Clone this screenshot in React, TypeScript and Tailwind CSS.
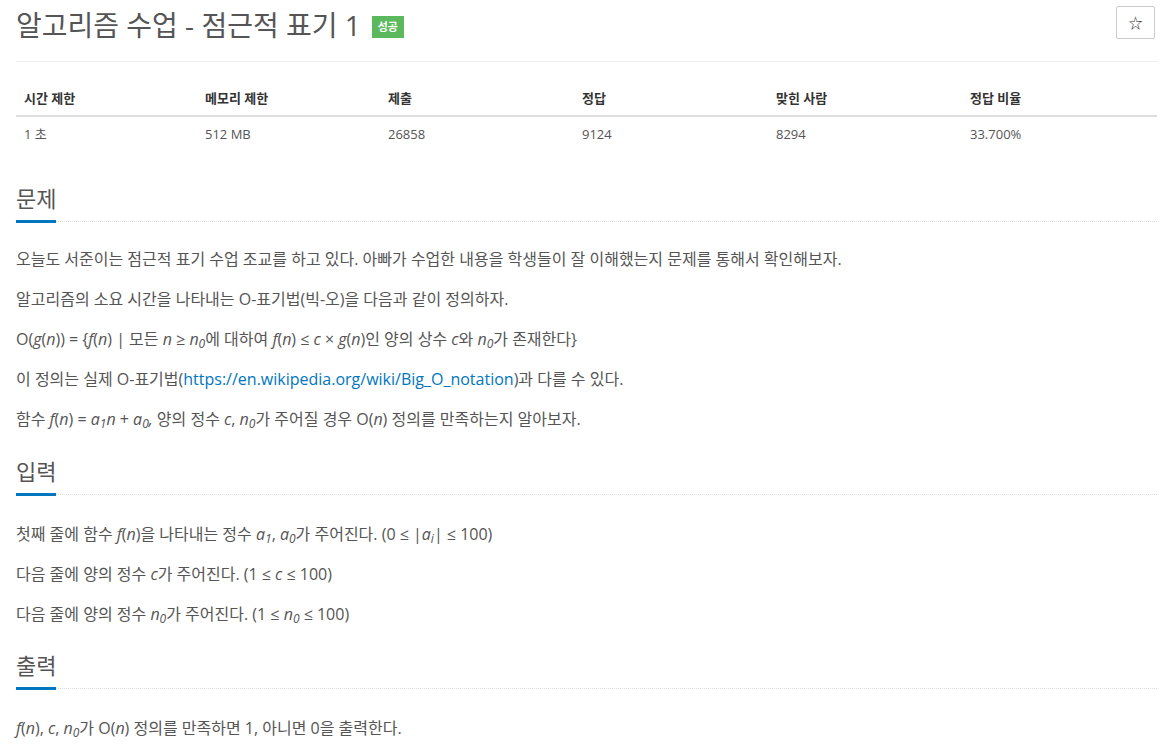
import React from 'react';

const font = { fontFamily: '"Open Sans", "Noto Sans CJK KR", sans-serif' };

const SectionTitle = ({ title, className }: { title: string, className?: string }) => (
    <div className={`border-b border-dotted border-[#ddd] ${className ?? ''}`}>
        <span className="inline-block -mb-[2px] border-b-[3px] border-[#0076c0] pb-[7px] text-[22px] leading-[30px] text-[#555]">
            {title}
        </span>
    </div>
);

const P = ({ children }: { children: React.ReactNode }) => (
    <p className="text-[16px] leading-[24px] text-[#555] mb-4">{children}</p>
);

const App: React.FC = () => {
    const stats = [
        { label: "시간 제한", value: "1 초", w: "w-[181px]" },
        { label: "메모리 제한", value: "512 MB", w: "w-[183px]" },
        { label: "제출", value: "26858", w: "w-[194px]" },
        { label: "정답", value: "9124", w: "w-[194px]" },
        { label: "맞힌 사람", value: "8294", w: "w-[194px]" },
        { label: "정답 비율", value: "33.700%", w: "" },
    ];

    return (
        <div className="bg-white min-h-screen px-4 pt-[6px]" style={font}>
            <div className="flex items-start justify-between">
                <div className="flex items-center gap-[11px] pt-[4px]">
                    <h1 className="text-[28px] leading-[30px] text-[#555]">알고리즘 수업 - 점근적 표기 1</h1>
                    <span className="mt-[4px] bg-[#5cb85c] text-white text-[11px] font-bold px-[6px] leading-[22px]">성공</span>
                </div>
                <button className="mr-[2px] w-[39px] h-[33px] border border-[#ccc] rounded-[2px] flex items-center justify-center text-[14px] text-[#333]">
                    ☆
                </button>
            </div>

            <div className="mt-[21px] border-t border-[#eee]" />

            <table className="mt-[26px] w-full text-[13px] border-collapse">
                <thead>
                    <tr className="border-b-2 border-[#ddd]">
                        {stats.map((s) => (
                            <th key={s.label} className={`${s.w} text-left font-bold text-[#333] px-2 pb-[7px] pt-0 leading-[20px]`}>
                                {s.label}
                            </th>
                        ))}
                    </tr>
                </thead>
                <tbody>
                    <tr>
                        {stats.map((s) => (
                            <td key={s.label} className="px-2 py-[7px] leading-[20px] text-[#555]">{s.value}</td>
                        ))}
                    </tr>
                </tbody>
            </table>

            <SectionTitle title="문제" className="mt-[32px]" />
            <div className="pt-[25px]">
                <P>오늘도 서준이는 점근적 표기 수업 조교를 하고 있다. 아빠가 수업한 내용을 학생들이 잘 이해했는지 문제를 통해서 확인해보자.</P>
                <P>알고리즘의 소요 시간을 나타내는 O-표기법(빅-오)을 다음과 같이 정의하자.</P>
                <P>
                    O(<i>g</i>(<i>n</i>)) = {'{'}<i>f</i>(<i>n</i>) | 모든 <i>n</i> ≥ <i>n<sub>0</sub></i>에 대하여 <i>f</i>(<i>n</i>) ≤ <i>c</i> × <i>g</i>(<i>n</i>)인 양의 상수 <i>c</i>와 <i>n<sub>0</sub></i>가 존재한다{'}'}
                </P>
                <P>
                    이 정의는 실제 O-표기법(<a className="text-[#0076c0]">https://en.wikipedia.org/wiki/Big_O_notation</a>)과 다를 수 있다.
                </P>
                <P>
                    함수 <i>f</i>(<i>n</i>) = <i>a<sub>1</sub>n</i> + <i>a<sub>0</sub>,</i> 양의 정수 <i>c</i>, <i>n<sub>0</sub></i>가 주어질 경우 O(<i>n</i>) 정의를 만족하는지 알아보자.
                </P>
            </div>

            <SectionTitle title="입력" className="mt-[25px]" />
            <div className="pt-[27px]">
                <P>
                    첫째 줄에 함수 <i>f</i>(<i>n</i>)을 나타내는 정수 <i>a<sub>1</sub></i>, <i>a<sub>0</sub></i>가 주어진다. (0 ≤ |<i>a<sub>i</sub></i>| ≤ 100)
                </P>
                <P>다음 줄에 양의 정수 <i>c</i>가 주어진다. (1 ≤ <i>c</i> ≤ 100)</P>
                <P>다음 줄에 양의 정수 <i>n<sub>0</sub></i>가 주어진다. (1 ≤ <i>n<sub>0</sub></i> ≤ 100)</P>
            </div>

            <SectionTitle title="출력" className="mt-[24px]" />
            <div className="pt-[27px]">
                <P>
                    <i>f</i>(<i>n</i>), <i>c</i>, <i>n<sub>0</sub></i>가 O(<i>n</i>) 정의를 만족하면 1, 아니면 0을 출력한다.
                </P>
            </div>
        </div>
    );
};

export default App;
